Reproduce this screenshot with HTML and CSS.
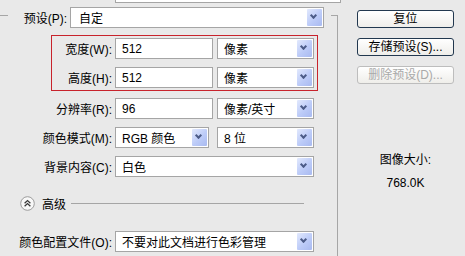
FILE: index.html
```html
<!DOCTYPE html>
<html lang="zh-CN">
<head>
    <meta charset="UTF-8">
    <title>新建</title>
    <link rel="stylesheet" href="styles.css">
</head>
<body>
    <div class="dialog">
        <div class="left">
            <div class="name-tail"></div>

            <div class="preset-row">
                <span class="preset-label">预设(P):</span>
                <div class="select preset"><span class="value">自定</span><span class="arrow"></span></div>
            </div>

            <div class="dims">
                <div class="row">
                    <span class="label">宽度(W):</span>
                    <div class="input">512</div>
                    <div class="select unit"><span class="value">像素</span><span class="arrow"></span></div>
                </div>
                <div class="row">
                    <span class="label">高度(H):</span>
                    <div class="input">512</div>
                    <div class="select unit"><span class="value">像素</span><span class="arrow"></span></div>
                </div>
            </div>

            <div class="fields">
                <div class="row">
                    <span class="label">分辨率(R):</span>
                    <div class="input">96</div>
                    <div class="select unit"><span class="value">像素/英寸</span><span class="arrow"></span></div>
                </div>
                <div class="row">
                    <span class="label">颜色模式(M):</span>
                    <div class="select mode"><span class="value">RGB 颜色</span><span class="arrow"></span></div>
                    <div class="select unit"><span class="value">8 位</span><span class="arrow"></span></div>
                </div>
                <div class="row">
                    <span class="label">背景内容(C):</span>
                    <div class="select wide"><span class="value">白色</span><span class="arrow"></span></div>
                </div>
            </div>

            <div class="advanced">
                <svg class="adv-icon" width="15" height="15" viewBox="0 0 15 15">
                    <circle cx="7.5" cy="7.5" r="6.8" fill="#f8f8f8" stroke="#9c9c9c"/>
                    <path d="M4.6 7.2 L7.5 4.6 L10.4 7.2 M4.6 10.2 L7.5 7.6 L10.4 10.2" fill="none" stroke="#3a3a3a" stroke-width="1.3"/>
                </svg>
                <span class="adv-text">高级</span>
                <span class="adv-line"></span>
            </div>

            <div class="row profile">
                <span class="label">颜色配置文件(O):</span>
                <div class="select wide"><span class="value">不要对此文档进行色彩管理</span><span class="arrow"></span></div>
            </div>
        </div>

        <div class="right">
            <div class="btn">复位</div>
            <div class="btn">存储预设(S)...</div>
            <div class="btn disabled">删除预设(D)...</div>

            <div class="info">
                <div>图像大小:</div>
                <div class="size">768.0K</div>
            </div>
        </div>
    </div>
</body>
</html>
```

FILE: styles.css
```css
body {
    margin: 0;
    background-color: #e9e9e9;
    font-family: "Liberation Sans", "Noto Sans CJK SC", sans-serif;
    font-size: 12px;
    color: #000;
    overflow: hidden;
}

.dialog {
    display: flex;
    height: 256px;
}

.left {
    position: relative;
    flex: none;
    width: 338px;
}

/* group box edges, the rest of the frame is outside the crop */
.left::before {
    content: "";
    position: absolute;
    left: 0;
    top: 15px;
    width: 8px;
    border-top: 1px solid #a6a6a6;
}

.left::after {
    content: "";
    position: absolute;
    left: 331px;
    top: 15px;
    bottom: 0;
    width: 6px;
    border-top: 1px solid #a6a6a6;
    border-right: 1px solid #a6a6a6;
}

.name-tail {
    margin-left: 115px;
    width: 224px;
    height: 2px;
    background-color: #fff;
    border: 1px solid #a5a5a5;
    border-top: none;
}

.preset-row {
    display: flex;
    align-items: center;
    margin-top: 4px;
}

.preset-label {
    width: 67px;
    margin-right: 3px;
    text-align: right;
    white-space: nowrap;
}

.row {
    display: flex;
    align-items: center;
    height: 21px;
}

.row + .row {
    margin-top: 8px;
}

.label {
    flex: none;
    width: 112px;
    margin-right: 3px;
    text-align: right;
    white-space: nowrap;
}

.dims {
    margin: 7px 0 0 51px;
    width: 267px;
    box-sizing: border-box;
    border: 1px solid #c8232c;
    padding: 2px 0;
}

.dims .label {
    width: 60px;
}

.fields {
    margin-top: 7px;
}

.input {
    display: flex;
    align-items: center;
    flex: none;
    width: 98px;
    height: 21px;
    box-sizing: border-box;
    margin-right: 4px;
    padding-left: 6px;
    background-color: #fff;
    border: 1px solid #a5a5a5;
}

.select {
    display: flex;
    align-items: center;
    flex: none;
    height: 21px;
    box-sizing: border-box;
    background-color: #fff;
    border: 1px solid #a5a5a5;
}

.select .value {
    flex: 1;
    padding-left: 6px;
    white-space: nowrap;
    overflow: hidden;
}

.preset {
    width: 254px;
}

.preset .value {
    padding-left: 8px;
}

.unit {
    width: 97px;
}

.mode {
    width: 94px;
    margin-right: 8px;
}

.wide {
    width: 199px;
}

.arrow {
    position: relative;
    flex: none;
    width: 15px;
    height: 17px;
    margin-right: 1px;
    background: linear-gradient(135deg, #e2e9fd 0%, #bccbf8 55%, #a9baf0 100%);
    border-radius: 1px;
}

.arrow::after {
    content: "";
    position: absolute;
    left: 4px;
    top: 4px;
    width: 3px;
    height: 3px;
    border-right: 2px solid #4c5c88;
    border-bottom: 2px solid #4c5c88;
    transform: rotate(45deg);
}

.advanced {
    display: flex;
    align-items: center;
    height: 16px;
    margin-top: 18px;
    padding-left: 20px;
}

.adv-icon {
    flex: none;
}

.adv-text {
    margin-left: 7px;
}

.adv-line {
    width: 233px;
    margin-left: 5px;
    border-top: 1px solid #a5a5a5;
}

.profile {
    margin-top: 20px;
}

.right {
    display: flex;
    flex-direction: column;
    padding: 10px 0 0 19px;
}

.btn {
    width: 97px;
    height: 18px;
    box-sizing: border-box;
    border: 1px solid #22384f;
    border-radius: 3px;
    background: linear-gradient(#ffffff, #efeeea);
    text-align: center;
    line-height: 16px;
    white-space: nowrap;
}

.btn + .btn {
    margin-top: 10px;
}

.btn.disabled {
    border-color: #bdbdbd;
    color: #a9a9a9;
}

.info {
    width: 97px;
    margin-top: 68px;
    text-align: center;
    line-height: 16px;
}

.info .size {
    margin-top: 7px;
}
```
